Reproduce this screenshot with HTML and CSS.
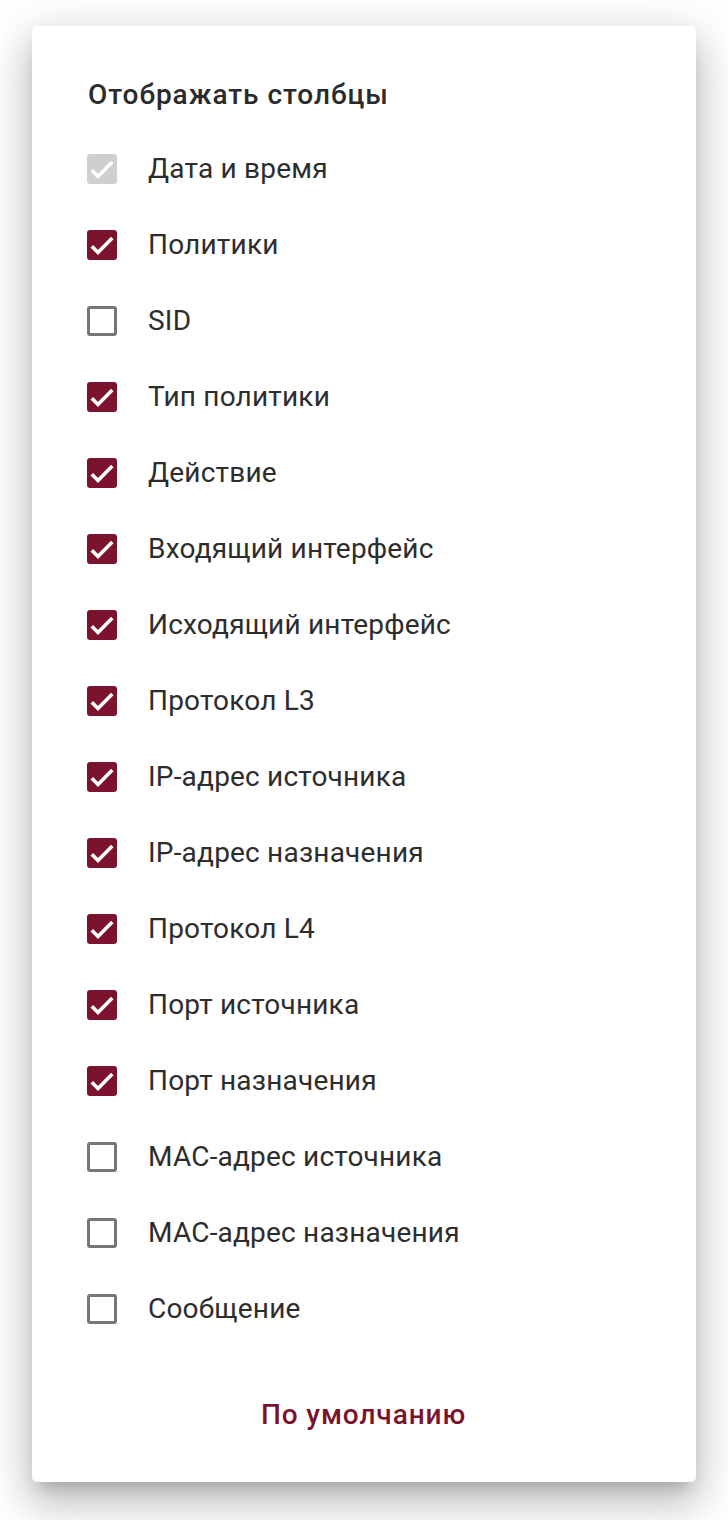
FILE: index.html
```html
<!DOCTYPE html>
<html lang="ru">
<head>
<meta charset="utf-8">
<link rel="stylesheet" href="styles.css">
</head>
<body>
<div class="card">
  <div class="title">Отображать столбцы</div>
  <ul class="list">
    <li class="row"><span class="box disabled"><svg viewBox="0 0 30 30"><path d="M4.8 16.2L11 22.4 25.3 8.1"/></svg></span><span class="label">Дата и время</span></li>
    <li class="row"><span class="box checked"><svg viewBox="0 0 30 30"><path d="M4.8 16.2L11 22.4 25.3 8.1"/></svg></span><span class="label">Политики</span></li>
    <li class="row"><span class="box"></span><span class="label">SID</span></li>
    <li class="row"><span class="box checked"><svg viewBox="0 0 30 30"><path d="M4.8 16.2L11 22.4 25.3 8.1"/></svg></span><span class="label">Тип политики</span></li>
    <li class="row"><span class="box checked"><svg viewBox="0 0 30 30"><path d="M4.8 16.2L11 22.4 25.3 8.1"/></svg></span><span class="label">Действие</span></li>
    <li class="row"><span class="box checked"><svg viewBox="0 0 30 30"><path d="M4.8 16.2L11 22.4 25.3 8.1"/></svg></span><span class="label">Входящий интерфейс</span></li>
    <li class="row"><span class="box checked"><svg viewBox="0 0 30 30"><path d="M4.8 16.2L11 22.4 25.3 8.1"/></svg></span><span class="label">Исходящий интерфейс</span></li>
    <li class="row"><span class="box checked"><svg viewBox="0 0 30 30"><path d="M4.8 16.2L11 22.4 25.3 8.1"/></svg></span><span class="label">Протокол L3</span></li>
    <li class="row"><span class="box checked"><svg viewBox="0 0 30 30"><path d="M4.8 16.2L11 22.4 25.3 8.1"/></svg></span><span class="label">IP-адрес источника</span></li>
    <li class="row"><span class="box checked"><svg viewBox="0 0 30 30"><path d="M4.8 16.2L11 22.4 25.3 8.1"/></svg></span><span class="label">IP-адрес назначения</span></li>
    <li class="row"><span class="box checked"><svg viewBox="0 0 30 30"><path d="M4.8 16.2L11 22.4 25.3 8.1"/></svg></span><span class="label">Протокол L4</span></li>
    <li class="row"><span class="box checked"><svg viewBox="0 0 30 30"><path d="M4.8 16.2L11 22.4 25.3 8.1"/></svg></span><span class="label">Порт источника</span></li>
    <li class="row"><span class="box checked"><svg viewBox="0 0 30 30"><path d="M4.8 16.2L11 22.4 25.3 8.1"/></svg></span><span class="label">Порт назначения</span></li>
    <li class="row"><span class="box"></span><span class="label">MAC-адрес источника</span></li>
    <li class="row"><span class="box"></span><span class="label">MAC-адрес назначения</span></li>
    <li class="row"><span class="box"></span><span class="label">Сообщение</span></li>
  </ul>
  <div class="actions"><button class="btn">По умолчанию</button></div>
</div>
</body>
</html>
```
FILE: styles.css
```css
html, body {
  margin: 0;
  padding: 0;
  background: #ffffff;
}
body {
  font-family: Roboto, "Liberation Sans", sans-serif;
  color: #2f2f2f;
  padding: 26px 32px 38px;
}
.card {
  width: 664px;
  height: 1456px;
  box-sizing: border-box;
  background: #fff;
  border-radius: 5px;
  padding: 49px 56px 32px 55px;
  display: flex;
  flex-direction: column;
  box-shadow: 0 11px 15px -7px rgba(0,0,0,.2), 0 24px 38px 3px rgba(0,0,0,.14), 0 9px 46px 8px rgba(0,0,0,.12);
}
.title {
  font-size: 28px;
  font-weight: 500;
  line-height: 40px;
  height: 40px;
  margin-left: 1px;
  letter-spacing: 0.95px;
  color: #2b2b2b;
}
.list {
  list-style: none;
  margin: 16px 0 0;
  padding: 0;
}
.row {
  height: 76px;
  display: flex;
  align-items: center;
  gap: 31px;
}
.box {
  width: 30px;
  height: 30px;
  box-sizing: border-box;
  border: 3px solid #777777;
  border-radius: 3px;
  flex: none;
  display: flex;
  align-items: center;
  justify-content: center;
}
.box svg {
  width: 30px;
  height: 30px;
  fill: none;
  stroke: #fff;
  stroke-width: 3.6;
}
.box.checked {
  background: #7b132f;
  border: none;
}
.box.disabled {
  background: #cfcfcf;
  border: none;
}
.label {
  font-size: 28px;
  line-height: 40px;
  letter-spacing: 0.2px;
  color: #2d2d2d;
}
.actions {
  margin-top: 31px;
  display: flex;
  justify-content: center;
}
.btn {
  font-family: Roboto, "Liberation Sans", sans-serif;
  font-size: 28px;
  font-weight: 500;
  color: #7b132f;
  background: none;
  border: none;
  height: 72px;
  padding: 0 16px;
  letter-spacing: 0.9px;
}
```
